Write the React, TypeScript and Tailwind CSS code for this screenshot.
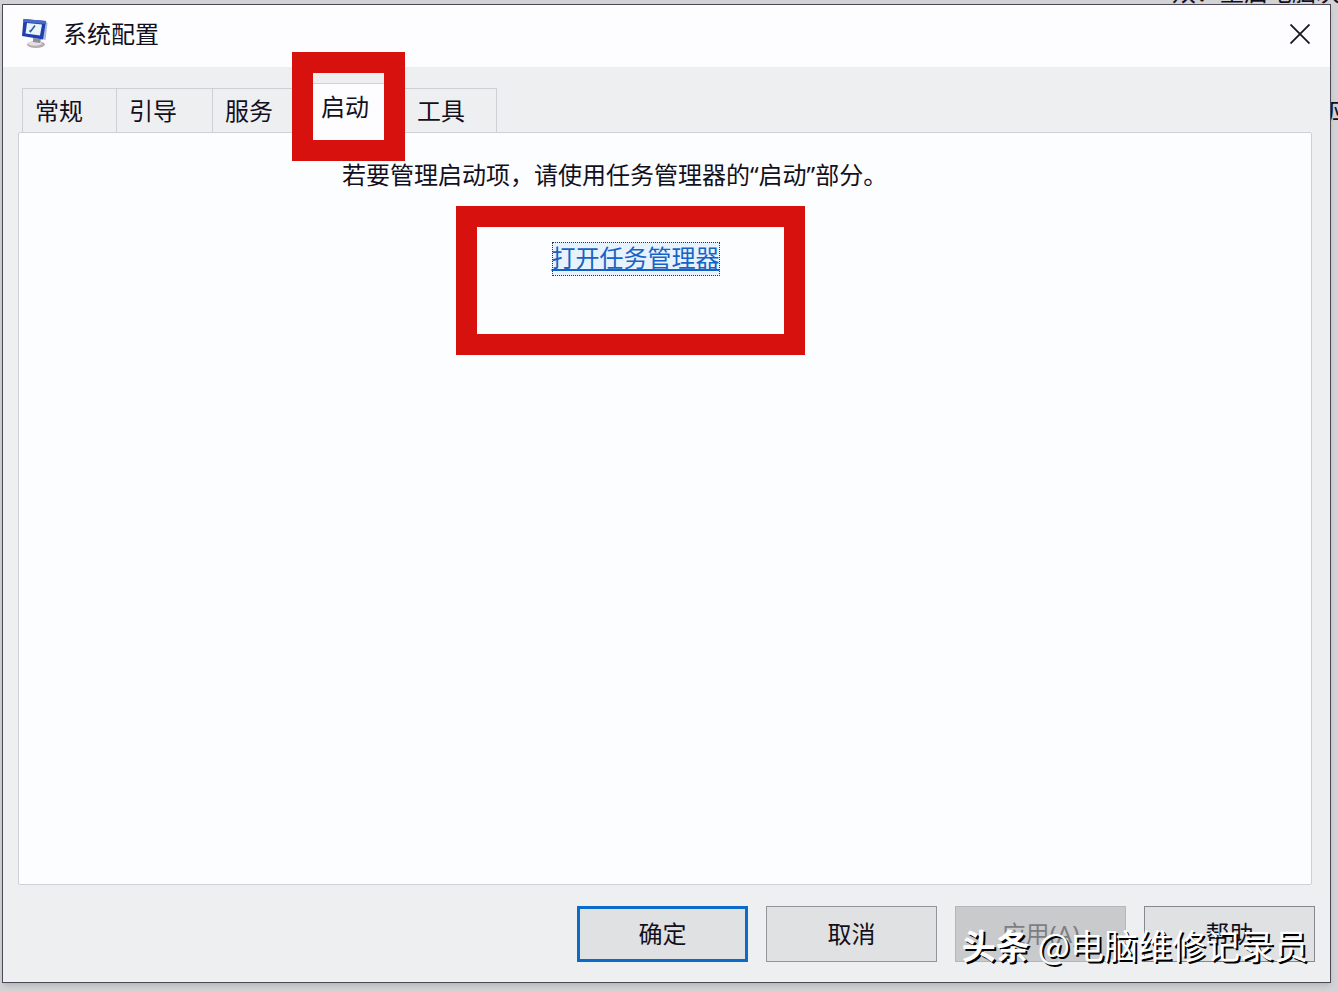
import { clsx } from "clsx";

const tabs = [
  { label: "常规", width: "w-[95px]" },
  { label: "引导", width: "w-24" },
  { label: "服务", width: "w-24" },
  { label: "启动", width: "w-24", active: true },
  { label: "工具", width: "w-[92px]" },
];

const buttons = [
  { label: "确定", style: "border-[3px] border-[#0a6bc9] bg-[#e0e1e3] text-[#12101c]" },
  { label: "取消", style: "border border-[#929599] bg-[#e0e1e3] text-[#12101c]" },
  {
    label: "应用(A)",
    style: "border border-[#b4b6b9] bg-[#c9cacc] text-[#7d7e82]",
    disabled: true,
  },
  { label: "帮助", style: "border border-[#85888c] bg-[#e0e1e3] text-[#12101c]" },
];

function SystemIcon() {
  return (
    <svg viewBox="0 0 28 32" className="h-8 w-7" aria-hidden="true">
      <ellipse cx="15" cy="26.500" rx="9" ry="3.500" fill="#b3adb2" />
      <ellipse cx="14" cy="25.500" rx="7" ry="2.200" fill="#e6dfe0" />
      <path d="M12 20 L20 21 L19 25 L12 24 Z" fill="#8f8ea2" />
      <path d="M24 3 L26.500 5 L24.500 22 L21 21 Z" fill="#a9b8dc" />
      <path d="M2.500 1 L25 3 L22 21.500 L1 18 Z" fill="#1f3fae" />
      <path d="M2.500 1 L25 3 L24.500 6 L2.500 4 Z" fill="#4769c8" />
      <path d="M6 5 L21 6.500 L19 17.500 L4.500 15.500 Z" fill="#e8f3fc" />
      <path d="M8.500 12.500 L9.500 13.500 L14 7.500" fill="none" stroke="#2c5e91" strokeWidth="1.600" />
    </svg>
  );
}

export default function App() {
  return (
    <div className="relative flex min-h-screen overflow-hidden bg-[#d3d2d4] pt-1 pr-[7px] pb-[9px] pl-0.5 font-['Noto_Sans','Noto_Sans_CJK_SC',sans-serif] text-2xl leading-8 text-[#12101c]">
      {/* page behind the dialog */}
      <div aria-hidden="true" className="absolute -top-6 -right-0.5 whitespace-nowrap">
        双：重启电脑次
      </div>
      <div aria-hidden="true" className="absolute top-[94px] -right-3.5">
        应
      </div>

      <main className="relative flex grow flex-col border border-[#4b4958] bg-[#eeeff1] shadow-md">
        <header className="flex h-[62px] items-center bg-[#fdfdff] pr-5 pb-1 pl-[18px]">
          <SystemIcon />
          <h1 className="ml-3.5 grow">系统配置</h1>
          <button type="button" aria-label="关闭" className="p-0">
            <svg viewBox="0 0 20 20" className="h-5 w-5" aria-hidden="true">
              <path d="M.5 .5 L19.500 19.500 M19.500 .5 L.5 19.500" stroke="#17151f" strokeWidth="1.800" />
            </svg>
          </button>
        </header>

        {/* tabs */}
        <div role="tablist" className="flex items-end pt-4 pl-[19px]">
          {tabs.map((tab) => (
            <div
              key={tab.label}
              className={clsx(
                "relative border-t border-r border-[#cdd0d4] first:border-l",
                tab.width,
                tab.active ? "z-10 -mb-px h-[50px] bg-[#fdfdff]" : "h-11",
              )}
            >
              <button
                type="button"
                role="tab"
                aria-selected={!!tab.active}
                className={clsx("h-full w-full pl-3 text-left", tab.active && "pb-1")}
              >
                {tab.label}
              </button>
              {tab.active && (
                <div className="pointer-events-none absolute -top-8 -left-[17px] h-[109px] w-[113px] border-[21px] border-[#d7120e]" />
              )}
            </div>
          ))}
        </div>

        <section
          role="tabpanel"
          className="mr-[18px] ml-[15px] grow rounded-xs border border-[#cdd0d4] bg-[#fcfdff] pt-[26px]"
        >
          <p className="ml-[323px]">若要管理启动项，请使用任务管理器的“启动”部分。</p>
          <div className="mt-[15px] ml-[437px] flex h-[149px] w-[349px] justify-center border-[21px] border-[#d7120e] pt-[15px] pl-2.5">
            <a
              href="#taskmgr"
              className="h-[34px] bg-[#e6f3fe] text-[#1762c4] underline outline-1 -outline-offset-1 outline-dotted outline-[#26364f]"
            >
              打开任务管理器
            </a>
          </div>
        </section>

        <footer className="flex justify-end gap-[18px] pt-[21px] pr-[15px] pb-5">
          {buttons.map((button) => (
            <button
              key={button.label}
              type="button"
              disabled={button.disabled}
              className={clsx("h-14 w-[171px]", button.style)}
            >
              {button.label}
            </button>
          ))}
        </footer>
      </main>

      {/* watermark */}
      <div className="pointer-events-none absolute right-[30px] bottom-[22px] flex gap-2 font-['Noto_Sans_CJK_SC',sans-serif] text-[34px] leading-[50px] whitespace-nowrap text-white [text-shadow:2px_2px_0_#000]">
        <span className="font-bold">头条</span>
        <span>@电脑维修记录员</span>
      </div>
    </div>
  );
}
